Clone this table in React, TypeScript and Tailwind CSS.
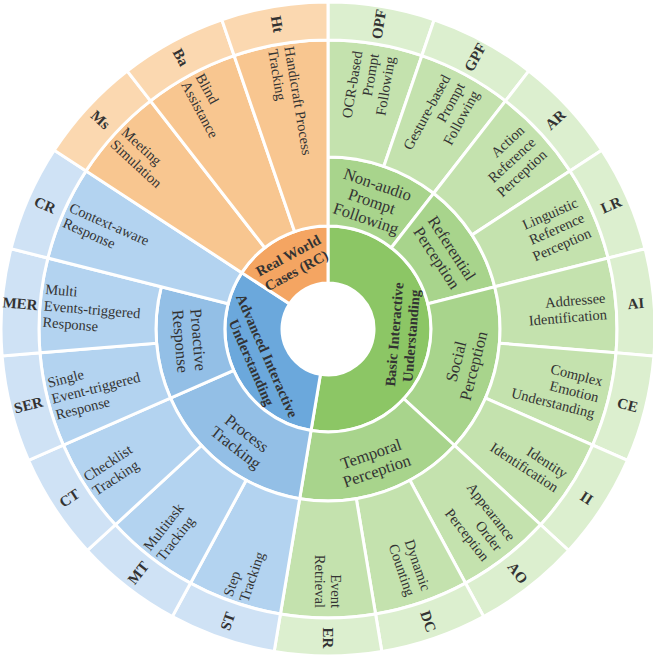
import React from "react";

const CX = 328;
const CY = 329;
const B = [46, 103, 172, 289, 327];
const STEP = 360 / 19;

const GREEN = ["#8cc665", "#a8d48c", "#c4e2ae", "#dcefcf"];
const BLUE = ["#6ba8dc", "#93bfe6", "#b3d3f0", "#cfe2f5"];
const ORANGE = ["#f4a562", "#f8c690", "#f8c690", "#fbd8b0"];

function pt(r: number, a: number) {
  const t = (a * Math.PI) / 180;
  return [CX + r * Math.sin(t), CY - r * Math.cos(t)];
}

function sector(r0: number, r1: number, a0: number, a1: number) {
  const large = a1 - a0 > 180 ? 1 : 0;
  const [x0, y0] = pt(r1, a0);
  const [x1, y1] = pt(r1, a1);
  const [x2, y2] = pt(r0, a1);
  const [x3, y3] = pt(r0, a0);
  return `M${x0} ${y0} A${r1} ${r1} 0 ${large} 1 ${x1} ${y1} L${x2} ${y2} A${r0} ${r0} 0 ${large} 0 ${x3} ${y3} Z`;
}

// leaf tasks, clockwise from the top
const leaves = [
  { ab: "OPF", lines: ["OCR-based", "Prompt", "Following"], c: GREEN },
  { ab: "GPF", lines: ["Gesture-based", "Prompt", "Following"], c: GREEN },
  { ab: "AR", lines: ["Action", "Reference", "Perception"], c: GREEN },
  { ab: "LR", lines: ["Linguistic", "Reference", "Perception"], c: GREEN },
  { ab: "AI", lines: ["Addressee", "Identification"], c: GREEN },
  { ab: "CE", lines: ["Complex", "Emotion", "Understanding"], c: GREEN },
  { ab: "II", lines: ["Identity", "Identification"], c: GREEN },
  { ab: "AO", lines: ["Appearance", "Order", "Perception"], c: GREEN },
  { ab: "DC", lines: ["Dynamic", "Counting"], c: GREEN },
  { ab: "ER", lines: ["Event", "Retrieval"], c: GREEN },
  { ab: "ST", lines: ["Step", "Tracking"], c: BLUE },
  { ab: "MT", lines: ["Multitask", "Tracking"], c: BLUE },
  { ab: "CT", lines: ["Checklist", "Tracking"], c: BLUE },
  { ab: "SER", lines: ["Single", "Event-triggered", "Response"], c: BLUE },
  { ab: "MER", lines: ["Multi", "Events-triggered", "Response"], c: BLUE },
  { ab: "CR", lines: ["Context-aware", "Response"], c: BLUE, merged: true },
  { ab: "Ms", lines: ["Meeting", "Simulation"], c: ORANGE, merged: true },
  { ab: "Ba", lines: ["Blind", "Assistance"], c: ORANGE, merged: true },
  { ab: "Ht", lines: ["Handicraft Process", "Tracking"], c: ORANGE, merged: true },
];

const subs = [
  { lines: ["Non-audio", "Prompt", "Following"], from: 0, n: 2, c: GREEN, r: 135 },
  { lines: ["Referential", "Perception"], from: 2, n: 2, c: GREEN, r: 139 },
  { lines: ["Social", "Perception"], from: 4, n: 3, c: GREEN, r: 141 },
  { lines: ["Temporal", "Perception"], from: 7, n: 3, c: GREEN, r: 141 },
  { lines: ["Process", "Tracking"], from: 10, n: 3, c: BLUE, r: 141 },
  { lines: ["Proactive", "Response"], from: 13, n: 2, c: BLUE, r: 139 },
];

const cats = [
  { lines: ["Basic Interactive", "Understanding"], from: 0, n: 10, c: GREEN },
  { lines: ["Advanced Interactive", "Understanding"], from: 10, n: 6, c: BLUE },
  { lines: ["Real World", "Cases (RC)"], from: 16, n: 3, c: ORANGE },
];

function tangRot(a: number) {
  if (a > 90 && a < 270) return a - 180;
  return a > 270 ? a - 360 : a;
}

function Lines({ lines, x, lh, fs, anchor }: { lines: string[]; x: number; lh: number; fs: number; anchor: "start" | "middle" | "end" }) {
  const n = lines.length;
  return (
    <text textAnchor={anchor} fontSize={fs}>
      {lines.map((l, i) => (
        <tspan key={i} x={x} y={(i - (n - 1) / 2) * lh + fs * 0.34}>
          {l}
        </tspan>
      ))}
    </text>
  );
}

function Tangential({ lines, a, r, fs, lh, bold }: { lines: string[]; a: number; r: number; fs: number; lh: number; bold?: boolean }) {
  const [x, y] = pt(r, a);
  return (
    <g transform={`translate(${x} ${y}) rotate(${tangRot(a)})`} fontWeight={bold ? 700 : 400}>
      <Lines lines={lines} x={0} lh={lh} fs={fs} anchor="middle" />
    </g>
  );
}

function Radial({ lines, a, r, fs, lh, bold, anchor }: { lines: string[]; a: number; r: number; fs: number; lh: number; bold?: boolean; anchor: "start" | "middle" | "end" }) {
  const right = a < 180.5;
  const rot = right ? a - 90 : a - 270;
  return (
    <g transform={`translate(${CX} ${CY}) rotate(${rot})`} fontWeight={bold ? 700 : 400}>
      <Lines lines={lines} x={right ? r : -r} lh={lh} fs={fs} anchor={anchor} />
    </g>
  );
}

export default function App() {
  return (
    <div className="w-[653px] h-[656px] bg-white">
      <svg width={653} height={656} viewBox="0 0 653 656" className="block" fontFamily="'Liberation Serif', 'Times New Roman', serif" fill="#333">
        <g stroke="#fff" strokeWidth={3}>
          {cats.map((c, i) => (
            <path key={"c" + i} d={sector(B[0], B[1], c.from * STEP, (c.from + c.n) * STEP)} fill={c.c[0]} />
          ))}
          {subs.map((s, i) => (
            <path key={"s" + i} d={sector(B[1], B[2], s.from * STEP, (s.from + s.n) * STEP)} fill={s.c[1]} />
          ))}
          {leaves.map((l, i) => (
            <path key={"l" + i} d={sector(l.merged ? B[1] : B[2], B[3], i * STEP, (i + 1) * STEP)} fill={l.c[2]} />
          ))}
          {leaves.map((l, i) => (
            <path key={"o" + i} d={sector(B[3], B[4], i * STEP, (i + 1) * STEP)} fill={l.c[3]} />
          ))}
        </g>

        {cats.map((c, i) => (
          <Tangential key={"ct" + i} lines={c.lines} a={(c.from + c.n / 2) * STEP} r={75} fs={14.5} lh={17} bold />
        ))}
        {subs.map((s, i) => (
          <Tangential key={"st" + i} lines={s.lines} a={(s.from + s.n / 2) * STEP} r={s.r} fs={16.5} lh={18} />
        ))}
        {leaves.map((l, i) => {
          const a = (i + 0.5) * STEP;
          const right = a < 180.5;
          return (
            <Radial key={"lt" + i} lines={l.lines} a={a} r={right ? 279 : 285} fs={14.5} lh={16.5} anchor={right ? "end" : "start"} />
          );
        })}
        {leaves.map((l, i) => (
          <Radial key={"ot" + i} lines={[l.ab]} a={(i + 0.5) * STEP} r={309} fs={15} lh={16} bold anchor="middle" />
        ))}
      </svg>
    </div>
  );
}
